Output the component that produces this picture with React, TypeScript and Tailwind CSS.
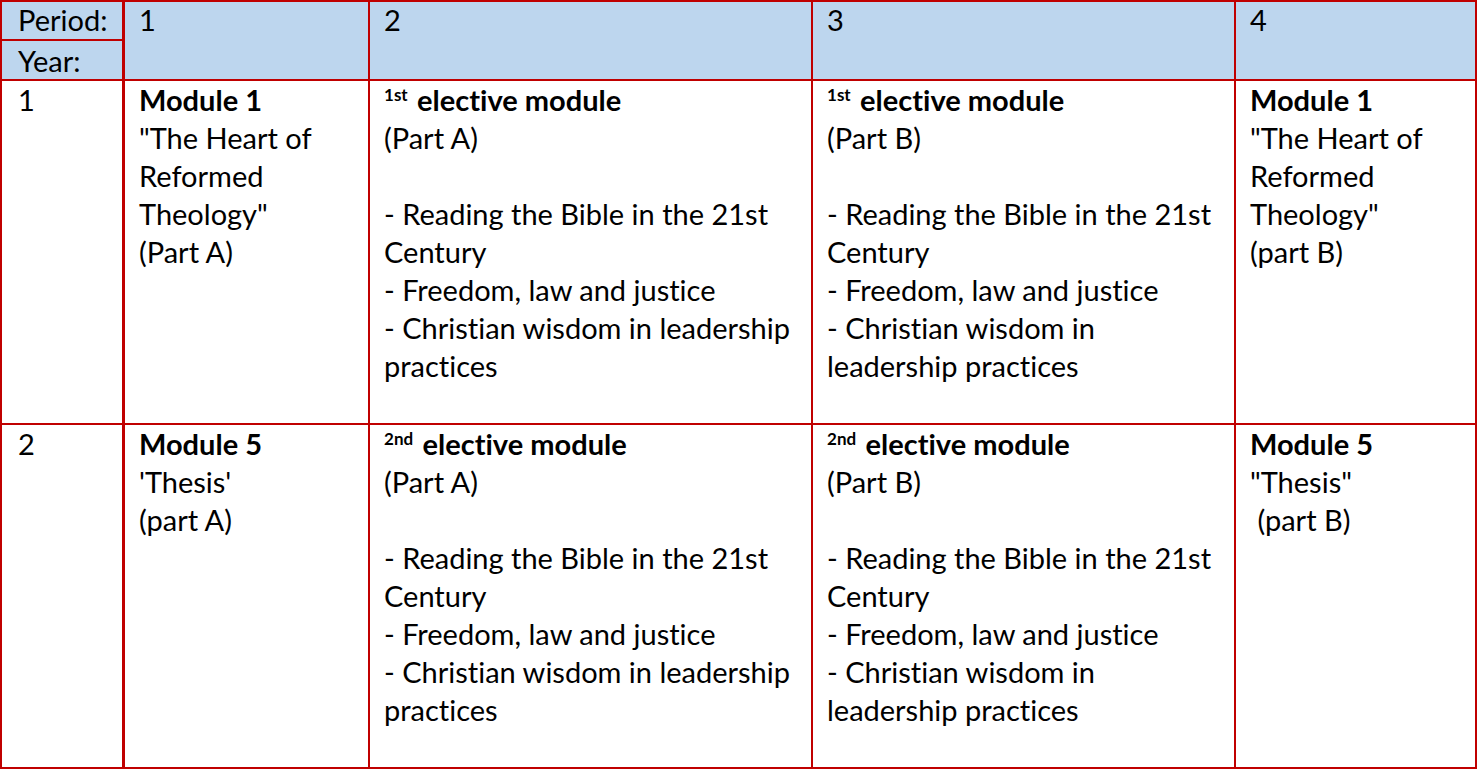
const cell = "border-r-2 border-b-2 border-[#c00000] pl-[14px] pt-0 leading-[38px]";
const head = "border-r-2 border-b-2 border-[#c00000] bg-[#bdd6ee] leading-[36px]";

function Lines({ lines }: { lines: string[] }) {
	return (
		<>
			{lines.map((line, i) => (
				<div key={i} className="whitespace-pre h-[38px]">
					{line}
				</div>
			))}
		</>
	);
}

function ElectiveBody({ nth, sup, part, wide }: { nth: string; sup: string; part: string; wide?: boolean }) {
	const tail = wide
		? ["- Christian wisdom in leadership", "practices"]
		: ["- Christian wisdom in", "leadership practices"];
	return (
		<>
			<div className="whitespace-nowrap h-[38px]">
				<sup className="text-[17px] font-bold top-[-10px] leading-none">
					{nth}
					{sup}
				</sup>{" "}
				<span className="font-bold ml-[2px]">elective module</span>
			</div>
			<Lines
				lines={[`(Part ${part})`, "", "- Reading the Bible in the 21st", "Century", "- Freedom, law and justice", ...tail]}
			/>
		</>
	);
}

export default function App() {
	return (
		<div className="min-h-screen bg-white">
			<div
				className="grid w-fit grid-cols-[123px_245px_443px_423px_241px] grid-rows-[39px_40px_344px_344px] border-l-2 border-t-2 border-[#c00000] text-[29px] text-black [font-variant-ligatures:none]"
				style={{ fontFamily: "Lato, 'Noto Sans', sans-serif" }}
			>
				{/* header */}
				<div className={`${head} border-r-[3px] pl-[16px]`}>Period:</div>
				<div className={`${head} row-span-2 pl-[14px]`}>1</div>
				<div className={`${head} row-span-2 pl-[14px]`}>2</div>
				<div className={`${head} row-span-2 pl-[14px]`}>3</div>
				<div className={`${head} row-span-2 pl-[14px]`}>4</div>
				<div className={`${head} border-r-[3px] pl-[16px] pt-[2px]`}>Year:</div>

				{/* year 1 */}
				<div className={`${cell} border-r-[3px] pl-[16px]`}>1</div>
				<div className={cell}>
					<div className="font-bold h-[38px]">Module 1</div>
					<Lines lines={['"The Heart of', "Reformed", 'Theology"', "(Part A)"]} />
				</div>
				<div className={cell}>
					<ElectiveBody nth="1" sup="st" part="A" wide />
				</div>
				<div className={cell}>
					<ElectiveBody nth="1" sup="st" part="B" />
				</div>
				<div className={cell}>
					<div className="font-bold h-[38px]">Module 1</div>
					<Lines lines={['"The Heart of', "Reformed", 'Theology"', "(part B)"]} />
				</div>

				{/* year 2 */}
				<div className={`${cell} border-r-[3px] pl-[16px]`}>2</div>
				<div className={cell}>
					<div className="font-bold h-[38px]">Module 5</div>
					<Lines lines={["'Thesis'", "(part A)"]} />
				</div>
				<div className={cell}>
					<ElectiveBody nth="2" sup="nd" part="A" wide />
				</div>
				<div className={cell}>
					<ElectiveBody nth="2" sup="nd" part="B" />
				</div>
				<div className={cell}>
					<div className="font-bold h-[38px]">Module 5</div>
					<Lines lines={['"Thesis"', " (part B)"]} />
				</div>
			</div>
		</div>
	);
}
